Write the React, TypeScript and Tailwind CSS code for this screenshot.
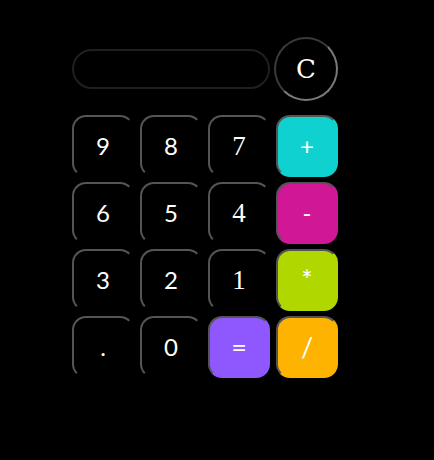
const keys = [
  { label: "9" },
  { label: "8" },
  { label: "7", serif: true },
  { label: "+", bg: "bg-[#0fd1cf]" },
  { label: "6" },
  { label: "5" },
  { label: "4", serif: true },
  { label: "-", bg: "bg-[#d01796]" },
  { label: "3" },
  { label: "2" },
  { label: "1", serif: true },
  { label: "*", bg: "bg-[#b1d700]", big: true },
  { label: "." },
  { label: "0" },
  { label: "=", bg: "bg-[#8e58fe]", big: true },
  { label: "/", bg: "bg-[#feb300]", big: true },
];

export default function App() {
  return (
    <div className="min-h-[460px] w-[434px] bg-black pl-[72px] pt-[37px]">
      {/* Display + clear */}
      <div className="flex items-center gap-[4px]">
        <div className="h-[40px] w-[198px] rounded-full border-2 border-[#1f1f1f]" />
        <button
          className="flex h-[64px] w-[64px] items-center justify-center rounded-full border-2 border-t-[#3a3a3a] border-l-[#3a3a3a] border-r-[#7a7a7a] border-b-[#7a7a7a] text-[26px] text-white"
          style={{ fontFamily: "'DejaVu Serif', serif" }}
        >
          C
        </button>
      </div>

      {/* Keypad */}
      <div className="mt-[14px] grid grid-cols-[62px_62px_62px_62px] auto-rows-[62px] gap-x-[6px] gap-y-[5px]">
        {keys.map((k, i) => (
          <button
            key={i}
            className={`flex items-center justify-center rounded-[14px] border-2 border-t-[#555] border-l-[#555] border-r-transparent border-b-transparent text-white ${
              k.bg ?? "bg-black"
            } ${k.serif ? "text-[27px]" : k.big ? "text-[27px]" : "text-[24px]"}`}
            style={{
              fontFamily: k.serif
                ? "'Liberation Serif', serif"
                : "Lato, 'Noto Sans', sans-serif",
            }}
          >
            {k.label}
          </button>
        ))}
      </div>
    </div>
  );
}
